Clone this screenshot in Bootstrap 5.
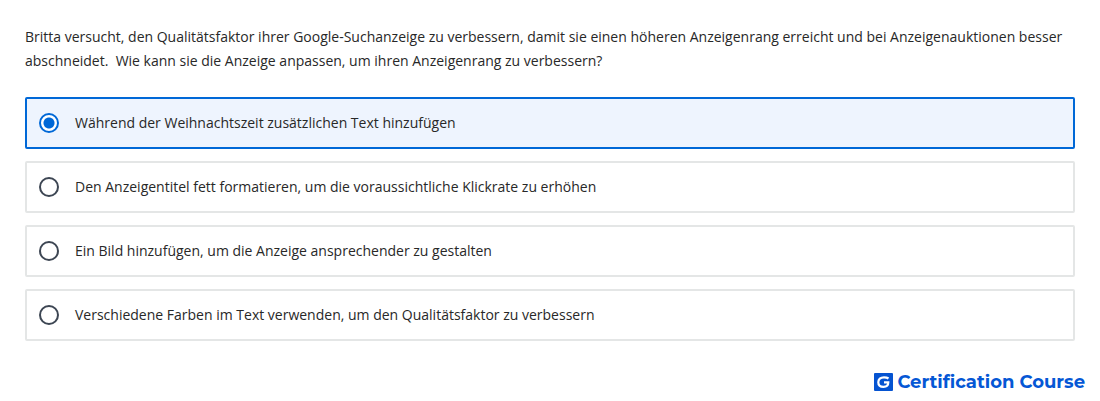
<!DOCTYPE html>
<html lang="de">
<head>
<meta charset="utf-8">
<meta name="viewport" content="width=device-width, initial-scale=1">
<title>Certification Course</title>
<link href="https://cdn.jsdelivr.net/npm/bootstrap@5.3.0/dist/css/bootstrap.min.css" rel="stylesheet">
<style>
body { font-family: "Open Sans", "Noto Sans", sans-serif; font-size: 14px; line-height: 24px; color: #282828; background: #fff; }
.quiz { padding: 25px 25px 0; }
.question { font-size: 14px; line-height: 24px; white-space: pre-wrap; }
.answers { gap: 12px; }
.answer { gap: 16px; padding: 12px; border: 2px solid #e4e6e6; border-radius: 2px; cursor: pointer; }
.answer:has(:checked) { border-color: #0068d7; background: #eef4fe; }
.answer .form-check-input { width: 20px; height: 20px; border: 2px solid #3d4653; background: #fff; }
.answer .form-check-input:checked { border-color: #0068d7; background: radial-gradient(circle, #0068d7 5px, #fff 6px); }
.brand { padding: 29px 15px 0; gap: 4px; }
.brand-name { font-family: Montserrat, "Open Sans", sans-serif; font-size: 18px; line-height: 24px; font-weight: 700; color: #0557d5; }
</style>
</head>
<body>
<main class="quiz container-fluid">
  <form>
    <fieldset>
      <legend class="question mb-4">Britta versucht, den Qualitätsfaktor ihrer Google-Suchanzeige zu verbessern, damit sie einen höheren Anzeigenrang erreicht und bei Anzeigenauktionen besser abschneidet.  Wie kann sie die Anzeige anpassen, um ihren Anzeigenrang zu verbessern?</legend>
      <div class="answers d-flex flex-column">
        <label class="answer d-flex align-items-center" for="a1"><input class="form-check-input m-0 flex-shrink-0" type="radio" name="answer" id="a1" checked><span>Während der Weihnachtszeit zusätzlichen Text hinzufügen</span></label>
        <label class="answer d-flex align-items-center" for="a2"><input class="form-check-input m-0 flex-shrink-0" type="radio" name="answer" id="a2"><span>Den Anzeigentitel fett formatieren, um die voraussichtliche Klickrate zu erhöhen</span></label>
        <label class="answer d-flex align-items-center" for="a3"><input class="form-check-input m-0 flex-shrink-0" type="radio" name="answer" id="a3"><span>Ein Bild hinzufügen, um die Anzeige ansprechender zu gestalten</span></label>
        <label class="answer d-flex align-items-center" for="a4"><input class="form-check-input m-0 flex-shrink-0" type="radio" name="answer" id="a4"><span>Verschiedene Farben im Text verwenden, um den Qualitätsfaktor zu verbessern</span></label>
      </div>
    </fieldset>
  </form>
</main>
<footer class="brand d-flex justify-content-end align-items-center">
  <svg width="19" height="18" viewBox="0 0 19 18" aria-hidden="true">
    <rect width="19" height="18" rx="1" fill="#0553d1"/>
    <path d="M14.500 5.500C13.300 4.600 11.900 4.300 10 4.300C6.400 4.300 4.300 6.300 4.300 9.200C4.300 12.200 6.400 13.900 9.500 13.900C12.500 13.900 14.300 12.600 14.300 9.300H10" fill="none" stroke="#fff" stroke-width="2.200"/>
  </svg>
  <span class="brand-name">Certification Course</span>
</footer>
<script src="https://cdn.jsdelivr.net/npm/bootstrap@5.3.0/dist/js/bootstrap.bundle.min.js"></script>
</body>
</html>
